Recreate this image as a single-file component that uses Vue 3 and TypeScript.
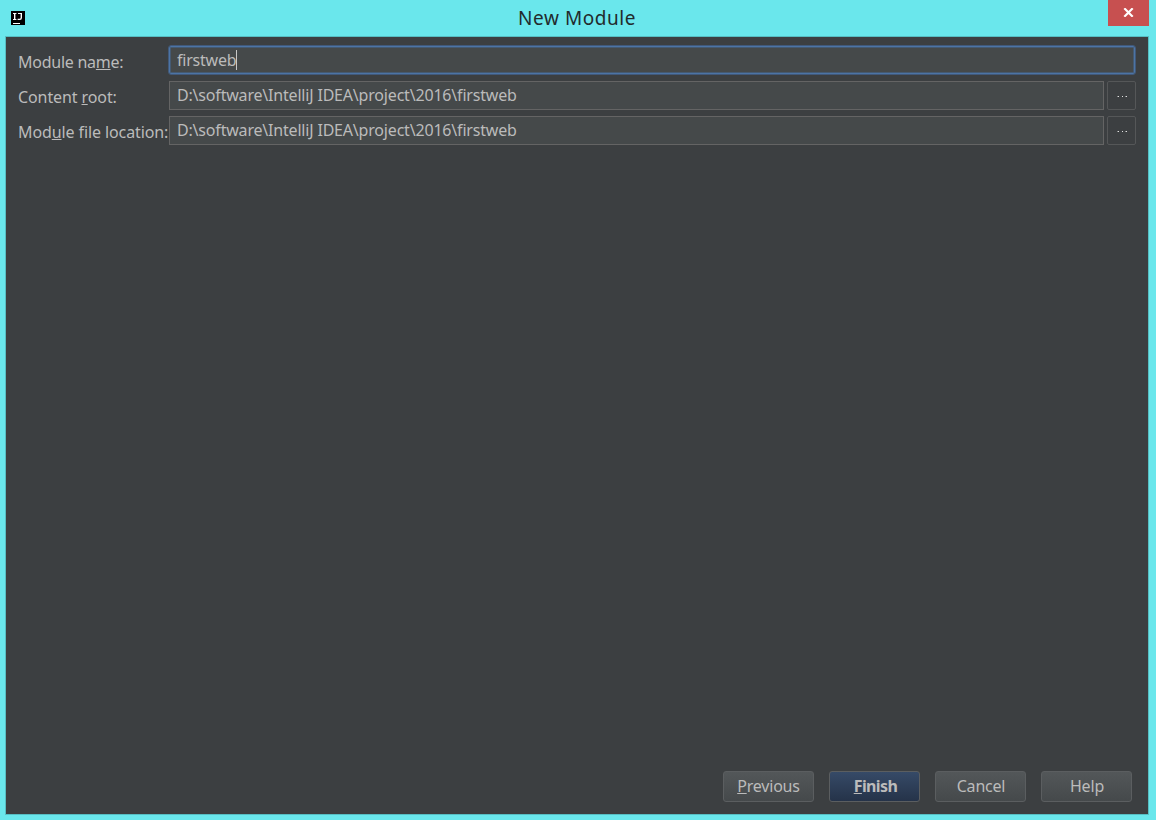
<script setup lang="ts">
import { ref } from 'vue'

interface Mnemonic {
  before: string
  key: string
  after: string
}

interface PathRow {
  id: string
  label: Mnemonic
  value: string
}

interface Action {
  id: string
  label: Mnemonic
  primary?: boolean
}

const moduleName = ref('firstweb')

const pathRows: PathRow[] = [
  {
    id: 'root',
    label: { before: 'Content ', key: 'r', after: 'oot:' },
    value: 'D:\\software\\IntelliJ IDEA\\project\\2016\\firstweb',
  },
  {
    id: 'location',
    label: { before: 'Mod', key: 'u', after: 'le file location:' },
    value: 'D:\\software\\IntelliJ IDEA\\project\\2016\\firstweb',
  },
]

const actions: Action[] = [
  { id: 'previous', label: { before: '', key: 'P', after: 'revious' } },
  { id: 'finish', label: { before: '', key: 'F', after: 'inish' }, primary: true },
  { id: 'cancel', label: { before: 'Cancel', key: '', after: '' } },
  { id: 'help', label: { before: 'Help', key: '', after: '' } },
]
</script>

<template>
  <div class="window">
    <header class="titlebar">
      <svg class="logo" width="14" height="14" viewBox="0 0 14 14">
        <rect width="14" height="14" fill="#000" />
        <path d="M2 2h3.4v1.1H4.4v4.8h1v1.1H2V7.900h1V3.100H2zM7 2h4v4.800q0 2.200-2.200 2.200H6.600V7.800h2q1 0 1-1V3.100H7zM2 12h7v1H2z" fill="#fff" />
      </svg>
      <h1 class="title"><span>New Module</span></h1>
      <button class="close" aria-label="Close">
        <svg width="11" height="9" viewBox="0 0 11 9">
          <path d="M1.300 .3L9.700 8.700M9.700 .3L1.300 8.700" stroke="#fff" stroke-width="2.200" />
        </svg>
      </button>
    </header>

    <main class="panel">
      <div class="form">
        <div class="row">
          <label class="label name">Module na<u>m</u>e:</label>
          <div class="field focused"><span class="short">{{ moduleName }}</span><i class="caret"></i></div>
        </div>
        <div v-for="row in pathRows" :key="row.id" class="row">
          <label class="label" :class="row.id">{{ row.label.before }}<u>{{ row.label.key }}</u>{{ row.label.after }}</label>
          <div class="field"><span class="path">{{ row.value }}</span></div>
          <button class="browse" aria-label="Browse"><i></i><i></i><i></i></button>
        </div>
      </div>

      <footer class="actions">
        <button
          v-for="action in actions"
          :key="action.id"
          class="action"
          :class="[action.id, { primary: action.primary }]"
        ><span>{{ action.label.before }}<u v-if="action.label.key">{{ action.label.key }}</u>{{ action.label.after }}</span></button>
      </footer>
    </main>
  </div>
</template>

<style>
html,
body {
  margin: 0;
  background: #6ae7ec;
}
</style>

<style scoped>
.window {
  box-sizing: border-box;
  width: 1156px;
  height: 820px;
  padding: 0 7px 5px 5px;
  display: flex;
  flex-direction: column;
  background: #6ae7ec;
  color: #bbbbbb;
  font-family: "Noto Sans", "Open Sans", sans-serif;
  font-size: 16px;
  overflow: hidden;
}

button {
  margin: 0;
  padding: 0;
  font: inherit;
  color: inherit;
  box-sizing: border-box;
}

.titlebar {
  display: flex;
  height: 36px;
  flex: none;
  align-items: flex-start;
}

.logo {
  margin: 11px 0 0 6px;
  flex: none;
}

.title {
  flex: 1;
  margin: 0 0 0 21px;
  text-align: center;
  font-size: 19px;
  font-weight: 400;
  letter-spacing: 0.55px;
  line-height: 36px;
  color: #222b2c;
}

.close {
  width: 41px;
  height: 26px;
  border: 0;
  background: #c75050;
  display: flex;
  align-items: center;
  justify-content: center;
}

.close svg {
  margin-bottom: 1px;
}

.panel {
  box-sizing: border-box;
  flex: 1;
  border: 1px solid #56bec3;
  background: #3c3f41;
  padding: 8px 12px 12px;
  display: flex;
  flex-direction: column;
  justify-content: space-between;
}

.row {
  display: flex;
  height: 29px;
  margin-bottom: 6px;
}

.row:first-child {
  height: 30px;
}

.label {
  width: 151px;
  flex: none;
  line-height: 33px;
  white-space: nowrap;
  letter-spacing: -0.1px;
}

.row:first-child .label {
  line-height: 35px;
  letter-spacing: -0.25px;
}

.short {
  letter-spacing: -0.22px;
}

.path {
  letter-spacing: -0.19px;
}

u {
  text-decoration: underline;
  text-decoration-thickness: 1px;
  text-underline-offset: 1px;
  text-decoration-skip-ink: none;
}

.field {
  box-sizing: border-box;
  flex: 1;
  border: 1px solid #646464;
  background: #45494a;
  padding-left: 7px;
  display: flex;
  line-height: 27px;
  white-space: pre;
}

.focused {
  border: 1px solid #41597a;
  box-shadow: 0 0 0 1px #4c74a5 inset, 0 0 0 2px #455a72 inset;
  border-radius: 3px;
  margin-left: -1px;
  padding: 1px 0 0 8px;
}

.caret {
  width: 1px;
  height: 20px;
  margin-top: 3px;
  background: #c8c8c8;
}

.browse {
  width: 29px;
  margin-left: 3px;
  border: 1px solid #555758;
  border-radius: 2px;
  background: #3c3f41;
  display: flex;
  align-items: center;
  justify-content: center;
  gap: 3px;
  padding-left: 2px;
}

.browse i {
  width: 1px;
  height: 1px;
  margin-top: 1px;
  background: #e0e0e0;
}

.browse i:not(:nth-child(2)) {
  box-shadow: -1px 0 #858788;
}

.actions {
  display: flex;
  justify-content: flex-end;
  gap: 15px;
  padding-right: 4px;
}

.action {
  width: 91px;
  height: 31px;
  border: 1px solid #5b5e60;
  border-radius: 3px;
  background: linear-gradient(#535759, #45494b);
  line-height: 29px;
  text-align: center;
}

.previous {
  letter-spacing: -0.2px;
}

.cancel,
.help {
  letter-spacing: -0.2px;
  padding-left: 1px;
}

.primary {
  background: linear-gradient(#364a67, #253349);
  font-weight: 700;
  letter-spacing: -0.6px;
  padding-left: 2px;
}
</style>
